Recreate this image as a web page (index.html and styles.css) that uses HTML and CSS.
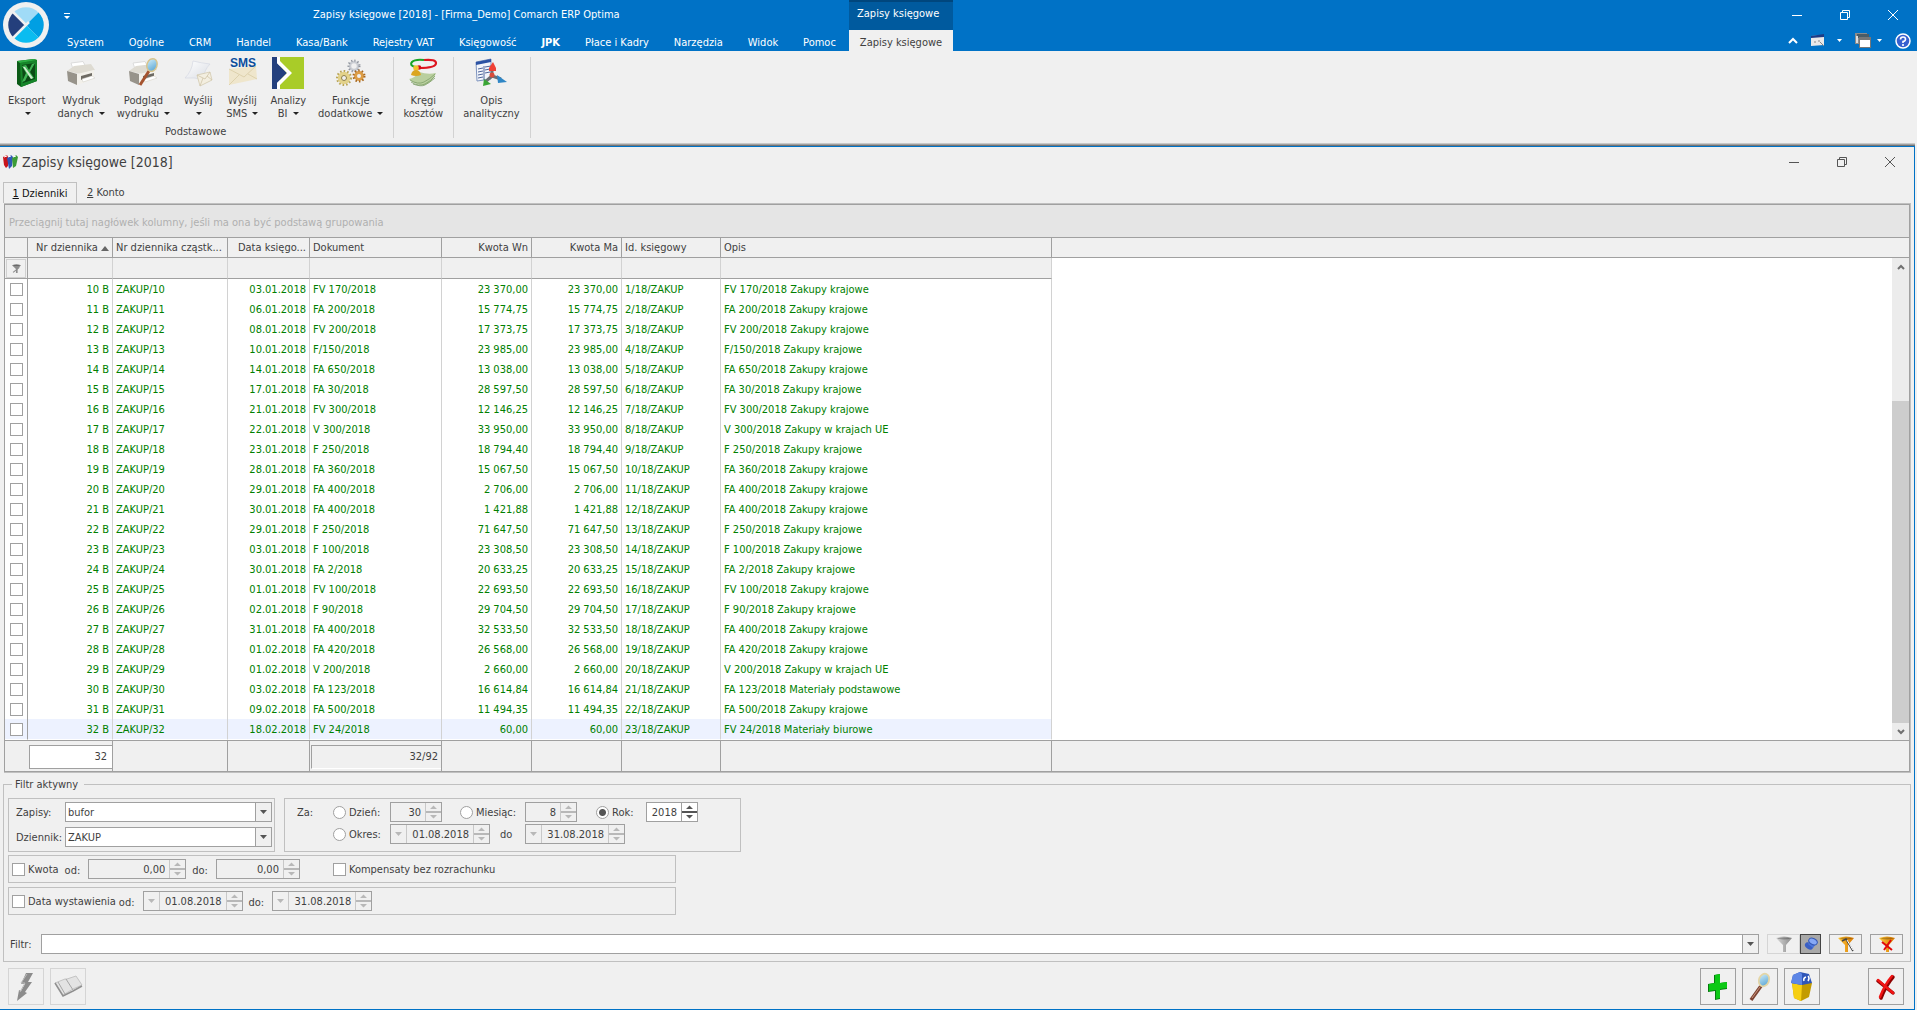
FILE: index.html
```html
<!DOCTYPE html>
<html lang="pl">
<head>
  <meta charset="UTF-8">
  <meta name="viewport" content="width=device-width, initial-scale=1.0">
  <title>Zapisy księgowe [2018] - [Firma_Demo] Comarch ERP Optima</title>
  <link rel="stylesheet" href="styles.css">
</head>
<body>
  <!-- icons used more than once -->
  <svg class="defs" width="0" height="0">
    <defs>
      <linearGradient id="gPaper" x1="0" y1="0" x2="1" y2="1"><stop offset="0" stop-color="#fff"/><stop offset="1" stop-color="#d9dce3"/></linearGradient>
      <linearGradient id="gGold" x1="0" y1="0" x2="1" y2="0"><stop offset="0" stop-color="#ffc93a"/><stop offset="1" stop-color="#d97800"/></linearGradient>
      <linearGradient id="gGray" x1="0" y1="0" x2="1" y2="0"><stop offset="0" stop-color="#d8d8d8"/><stop offset="1" stop-color="#8a8a8a"/></linearGradient>
      <linearGradient id="gLens" x1="0" y1="0" x2="1" y2="1"><stop offset="0" stop-color="#d5f0fb"/><stop offset="1" stop-color="#4f9fd0"/></linearGradient>
    </defs>
    <symbol id="min" viewBox="0 0 10 10"><path d="M0 5.500h10" stroke="currentColor" fill="none"/></symbol>
    <symbol id="restore" viewBox="0 0 10 10"><path d="M.5 2.500h7v7h-7zM2.500 2.500v-2h7v7h-2" stroke="currentColor" fill="none"/></symbol>
    <symbol id="close" viewBox="0 0 10 10"><path d="M0 0l10 10M10 0L0 10" stroke="currentColor" fill="none"/></symbol>
    <symbol id="spin" viewBox="0 0 15 18"><path d="M0 9h15" stroke="currentColor" stroke-width="2"/><path d="M4 6h7L7.500 2.500zM4 12h7l-3.500 3.500z" fill="currentColor"/></symbol>
    <symbol id="down" viewBox="0 0 7 4"><path d="M0 0h7L3.500 4z" fill="currentColor"/></symbol>
    <symbol id="funnel" viewBox="0 0 16 16"><path d="M0 2q8-3 16 0l-6 7v7H7V9z"/><path d="M1 2.500q7-2 14 0-7 2-14 0z" fill="#000" opacity=".25"/></symbol>
    <symbol id="printer" viewBox="0 0 32 32">
      <path d="M6 6l12-1.500 3 5.500-13 2z" fill="#fff" stroke="#dcdcdc"/>
      <path d="M2 14l7-5 17-2 4 6-15 4z" fill="#dedbd2"/>
      <path d="M2 14l10 3v11l-9-4z" fill="#97938a"/>
      <path d="M12 17l17-4v9l-17 6z" fill="#f2f0ea"/>
      <path d="M16 19l11-3v3l-11 4z" fill="#6d6a63"/>
      <path d="M17 22l10-3 3 2-12 4z" fill="#fff" stroke="#cfccc4" stroke-width=".5"/>
    </symbol>
    <symbol id="lens" viewBox="0 0 32 32">
      <path d="M17 15L7 29" stroke="#7d4433" stroke-width="3.500"/><path d="M16 16L8 27" stroke="#c9957f" stroke-width="1"/>
      <ellipse cx="20" cy="9" rx="5" ry="6.500" transform="rotate(22 20 9)" fill="url(#gLens)" stroke="#e4d6a6" stroke-width="1.800"/>
    </symbol>
  </svg>

  <header class="app-header">
    <button class="logo" aria-label="Menu aplikacji">
      <svg viewBox="0 0 46 46" width="46" height="46">
        <circle cx="23" cy="23" r="23" fill="#f0f0f0"/>
        <path d="M10.500 10.500a17.500 17.500 0 0 1 25 0L23 23z" fill="#a0dbf7"/>
        <path d="M35.500 10.500a17.500 17.500 0 0 1 0 25L23 23z" fill="#009fe3"/>
        <path d="M35.500 35.500a17.500 17.500 0 0 1-25 0L23 23z" fill="#0bbcf0"/>
        <path d="M10.500 10.500a17.500 17.500 0 0 0 0 25L23 23z" fill="#243f7c"/>
        <path d="M9.500 9.500L23 23 9.500 36.500M23 23l3-3" fill="none" stroke="#f0f0f0" stroke-width="2.500"/>
      </svg>
    </button>
    <div class="header-main">
      <div class="title-row">
        <button class="quick" aria-label="Szybki dostęp"><svg width="6" height="6" viewBox="0 0 6 6"><path d="M0 0h6v1H0zM0 3h6L3 6z" fill="#fff"/></svg></button>
        <span class="app-title">Zapisy księgowe [2018] - [Firma_Demo] Comarch ERP Optima</span>
        <span class="context-title">Zapisy księgowe</span>
        <div class="win-buttons">
          <button aria-label="Minimalizuj"><svg width="10" height="10"><use href="#min"/></svg></button>
          <button aria-label="Przywróć"><svg width="10" height="10"><use href="#restore"/></svg></button>
          <button aria-label="Zamknij"><svg width="10" height="10"><use href="#close"/></svg></button>
        </div>
      </div>
      <div class="menu-row">
        <nav class="menu">
          <a href="#">System</a><a href="#">Ogólne</a><a href="#">CRM</a><a href="#">Handel</a><a href="#">Kasa/Bank</a><a href="#">Rejestry VAT</a><a href="#">Księgowość</a><a href="#" class="bold">JPK</a><a href="#">Płace i Kadry</a><a href="#">Narzędzia</a><a href="#">Widok</a><a href="#">Pomoc</a>
        </nav>
        <a href="#" class="context-tab">Zapisy księgowe</a>
        <div class="menu-tools">
          <button aria-label="Zwiń wstążkę"><svg width="10" height="8" viewBox="0 0 10 8"><path d="M1 6l4-4 4 4" fill="none" stroke="#fff" stroke-width="2"/></svg></button>
          <button class="tool-card" aria-label="Wygląd"><svg width="14" height="13" viewBox="0 0 14 13"><path d="M0 2l13-1v10L0 12z" fill="#e9e9e9"/><path d="M0 2l13-2v3L0 4z" fill="#1d3c86"/><path d="M3 8h2M7 7h2M9 8l4 4" stroke="#888" fill="none"/></svg>
            <svg class="tiny" width="5" height="3"><use href="#down"/></svg></button>
          <button class="tool-windows" aria-label="Okna"><svg width="16" height="15" viewBox="0 0 16 15"><path d="M0 0h12v11H0z" fill="#8b8b8b"/><path d="M2 1h12v4H2z" fill="#4b5c66"/><path d="M1 3h2v7H1z" fill="#ddd"/><path d="M4 4h12v11H4z" fill="#777"/><path d="M5 7h10v7H5z" fill="#fff"/></svg>
            <svg class="tiny" width="5" height="3"><use href="#down"/></svg></button>
          <button aria-label="Pomoc"><svg width="16" height="16" viewBox="0 0 16 16"><circle cx="8" cy="8" r="7" fill="#3760cf" stroke="#fff" stroke-width="1.500"/><path d="M5.500 6.500q0-2.500 2.500-2.500t2.500 2.200Q10.500 8 8 8.500V10M8 11v2" fill="none" stroke="#fff" stroke-width="1.600"/></svg></button>
        </div>
      </div>
    </div>
  </header>

  <div class="ribbon">
    <div class="ribbon-group">
      <div class="ribbon-items">
        <button class="ribbon-btn">
          <svg width="32" height="32" viewBox="0 0 32 32"><path d="M6 4l17-2 3 1v21L10 30l-4-3z" fill="#0b5a16"/><path d="M9 6l17-3v21L10 30z" fill="#16852a"/><path d="M11 8l13-2v16l-12 4z" fill="#0a4a15"/><path d="M6 4l17-2 3 1L9 6z" fill="#2cae43"/><path d="M11 9l4-1 3 5 3-6 3-1-5 9 4 6-3 1-3-4-3 6-3 1 4-9z" fill="#3fb455"/><path d="M12 10l2 0 8 11-2 1z" fill="#cfeccf"/></svg>
          Eksport<br><i class="arrow"></i></button>
        <button class="ribbon-btn">
          <svg width="32" height="32"><use href="#printer"/></svg>
          Wydruk<br>danych <i class="arrow"></i></button>
        <button class="ribbon-btn">
          <svg width="32" height="32" viewBox="0 0 32 32"><use href="#printer"/><path d="M22 14L13 28" stroke="#a5532f" stroke-width="3"/><ellipse cx="25" cy="8" rx="5" ry="6.500" transform="rotate(20 25 8)" fill="url(#gLens)" stroke="#d8c48c" stroke-width="1.500"/></svg>
          Podgląd<br>wydruku <i class="arrow"></i></button>
        <button class="ribbon-btn">
          <svg width="32" height="32" viewBox="0 0 32 32"><path d="M11 4q8 2 17 3-6 6-7 16-8-3-18-2 7-7 8-17z" fill="url(#gPaper)" stroke="#d5d9e2" stroke-width=".7"/><path d="M15 18l13-3 2 8-12 6z" fill="#f3eee0" stroke="#cfc4a8" stroke-width=".7"/><path d="M15 18l8 4 5-7M18 29l3-8M30 23l-5-4" fill="none" stroke="#cfc4a8" stroke-width=".8"/></svg>
          Wyślij<br><i class="arrow"></i></button>
        <button class="ribbon-btn">
          <svg width="32" height="32" viewBox="0 0 32 32"><path d="M3 12l27-3 1 13L3 28z" fill="#efe6cc"/><path d="M3 12l15 8 12-11M3 28l10-10M31 22l-9-5" fill="none" stroke="#d8cba4" stroke-width=".8"/><text x="17" y="10" class="sms">SMS</text></svg>
          Wyślij<br>SMS <i class="arrow"></i></button>
        <button class="ribbon-btn">
          <svg width="32" height="32" viewBox="0 0 32 32"><path d="M8 0h24v32H8z" fill="#a9cc28"/><path d="M0 0h5v6l10 10L5 26v6H0z" fill="#24407e"/><path d="M5 0h3v4l12 12L8 28v4H5v-6l10-10L5 6z" fill="#fff"/></svg>
          Analizy<br>BI <i class="arrow"></i></button>
        <button class="ribbon-btn">
          <svg width="32" height="32" viewBox="0 0 32 32" fill="none"><circle cx="19" cy="9" r="4" stroke="#c9ccd2" stroke-width="2.500"/><circle cx="19" cy="9" r="5.500" stroke="#8e939c" stroke-width="2" stroke-dasharray="1.200 2"/><circle cx="9" cy="21" r="4.500" stroke="#e3d28a" stroke-width="3.500"/><circle cx="9" cy="21" r="7" stroke="#b9a455" stroke-width="2" stroke-dasharray="1.600 2"/><circle cx="9" cy="21" r="2.500" stroke="#8f7f40"/><circle cx="24" cy="19" r="3.500" stroke="#dd9d45" stroke-width="3"/><circle cx="24" cy="19" r="5.500" stroke="#a8661c" stroke-width="2" stroke-dasharray="1.500 2"/></svg>
          Funkcje<br>dodatkowe <i class="arrow"></i></button>
      </div>
      <div class="group-name">Podstawowe</div>
    </div>
    <div class="ribbon-group">
      <div class="ribbon-items">
        <button class="ribbon-btn">
          <svg width="32" height="32" viewBox="0 0 32 32"><path d="M2 22q6-1 10-7 9 3 17 1-3 9-11 12-9 1-16-6z" fill="#b9cf9e"/><path d="M3 23q8 5 14 2t11-8M4 25q8 5 14 2t10-8M6 27q8 3 12 1t10-7" fill="none" stroke="#7fa069" stroke-width=".8"/><path d="M8 10Q2 8 5 5t12-2" fill="none" stroke="#17a524" stroke-width="2.200"/><path d="M17 3q12-1 12 3 0 5-17 5" fill="none" stroke="#dd1620" stroke-width="2.200"/><circle cx="12" cy="10.500" r="2.300" fill="#d40d18"/><circle cx="9" cy="11" r="2.800" fill="#f2c230"/><path d="M4 18q1-5 5-5t5 5q-5 2-10 0z" fill="#dba520"/></svg>
          Kręgi<br>kosztów</button>
      </div>
    </div>
    <div class="ribbon-group">
      <div class="ribbon-items">
        <button class="ribbon-btn">
          <svg width="32" height="32" viewBox="0 0 32 32"><path d="M1 5l15-3v20L2 24z" fill="#f2f5fb" stroke="#7e94bf"/><path d="M1 5l15-3v3L1 8z" fill="#2b52a4"/><path d="M3 12l5-1M3 15l5-1M3 18l5-1M3 21l5-1M10 10l6-1M10 13l5-1M10 16l5-1M9 9v14" stroke="#4f659b" fill="none"/><path d="M17 19V9M17 19l9 3M17 19l-7 6" stroke-width="3" stroke="#6b6f75"/><path d="M14 11l4-6 3 6v3h-7z" fill="#ef4136"/><path d="M22 18l10 7-9 1z" fill="#2f86c5"/><path d="M8 29l1-7 7 5z" fill="#3aa535"/><circle cx="17" cy="18" r="2.500" fill="#d94b3a"/></svg>
          Opis<br>analityczny</button>
      </div>
    </div>
  </div>

  <main class="window">
    <div class="window-title">
      <svg width="15" height="14" viewBox="0 0 15 14"><path d="M0 2l4-2 1 2v9l-2 2-2-3z" fill="#c8141b"/><path d="M4 3l4-3 2 2-1 9-3 3z" fill="#2f58b5"/><path d="M9 3l4-3 2 2-2 9-3 2z" fill="#3c9c37"/><path d="M1 2l3-1M5 2l3-1M10 2l3-1" stroke="#fff"/></svg>
      <h1>Zapisy księgowe [2018]</h1>
      <div class="win-buttons dark">
        <button aria-label="Minimalizuj okno"><svg width="10" height="10"><use href="#min"/></svg></button>
        <button aria-label="Przywróć okno"><svg width="10" height="10"><use href="#restore"/></svg></button>
        <button aria-label="Zamknij okno"><svg width="10" height="10"><use href="#close"/></svg></button>
      </div>
    </div>

    <div class="tabs">
      <button class="tab active"><u>1</u> Dzienniki</button>
      <button class="tab"><u>2</u> Konto</button>
    </div>

    <div class="grid-panel">
      <div class="group-hint">Przeciągnij tutaj nagłówek kolumny, jeśli ma ona być podstawą grupowania</div>
      <table class="grid">
        <colgroup><col class="c-check"><col class="c-nr"><col class="c-part"><col class="c-date"><col class="c-doc"><col class="c-amount"><col class="c-amount"><col class="c-id"><col class="c-desc"><col></colgroup>
        <thead>
          <tr>
            <th></th><th class="num">Nr dziennika <i class="sort"></i></th><th>Nr dziennika cząstk...</th><th class="num">Data księgo...</th><th>Dokument</th><th class="num">Kwota Wn</th><th class="num">Kwota Ma</th><th>Id. księgowy</th><th>Opis</th><th class="rest"></th>
          </tr>
        </thead>
        <tbody id="rows">
          <tr class="filter-row">
            <td class="check"><button aria-label="Filtr kolumn"><svg width="9" height="9" viewBox="0 0 16 16" fill="#8c8c8c"><use href="#funnel"/><path d="M2 15L13 6" stroke="#8c8c8c" stroke-width="2"/></svg></button></td><td></td><td></td><td></td><td></td><td></td><td></td><td></td><td></td>
            <td class="rest" rowspan="24">
              <div class="scrollbar">
                <button aria-label="W górę"><svg width="8" height="6" viewBox="0 0 8 6"><path d="M1 5l3-3 3 3" fill="none" stroke="#707070" stroke-width="2"/></svg></button>
                <div class="track"></div>
                <div class="thumb"></div>
                <button aria-label="W dół"><svg width="8" height="6" viewBox="0 0 8 6"><path d="M1 1l3 3 3-3" fill="none" stroke="#707070" stroke-width="2"/></svg></button>
              </div>
            </td>
          </tr>
        </tbody>
        <tfoot>
          <tr>
            <td></td><td><div class="sum white">32</div></td><td></td><td></td><td><div class="sum">32/92</div></td><td></td><td></td><td></td><td></td><td class="rest"></td>
          </tr>
        </tfoot>
      </table>
    </div>

    <fieldset class="filters">
      <legend>Filtr aktywny</legend>
      <div class="filter-top">
        <div class="box kind">
          <label for="zapisy">Zapisy:</label>
          <div class="combo"><select id="zapisy"><option>bufor</option></select><span><svg width="7" height="4"><use href="#down"/></svg></span></div>
          <label for="dziennik">Dziennik:</label>
          <div class="combo"><select id="dziennik"><option>ZAKUP</option></select><span><svg width="7" height="4"><use href="#down"/></svg></span></div>
        </div>
        <div class="box period">
          <span>Za:</span>
          <label><input type="radio" name="za">Dzień:</label>
          <div class="field off short"><input type="text" value="30" aria-label="Dzień" disabled><svg width="15" height="18"><use href="#spin"/></svg></div>
          <label><input type="radio" name="za">Miesiąc:</label>
          <div class="field off short"><input type="text" value="8" aria-label="Miesiąc" disabled><svg width="15" height="18"><use href="#spin"/></svg></div>
          <label><input type="radio" name="za" checked>Rok:</label>
          <div class="field short"><input type="text" value="2018" aria-label="Rok"><svg width="15" height="18"><use href="#spin"/></svg></div>
          <label class="range-label"><input type="radio" name="za">Okres:</label>
          <div class="range">
            <div class="field off date"><span><svg width="7" height="4"><use href="#down"/></svg></span><input type="text" value="01.08.2018" aria-label="Okres od" disabled><svg width="15" height="18"><use href="#spin"/></svg></div>
            do
          </div>
          <div class="range">
            <div class="field off date"><span><svg width="7" height="4"><use href="#down"/></svg></span><input type="text" value="31.08.2018" aria-label="Okres do" disabled><svg width="15" height="18"><use href="#spin"/></svg></div>
          </div>
        </div>
      </div>
      <div class="box line amounts">
        <label class="first"><input type="checkbox">Kwota</label>
        <label for="kwota-od">od:</label>
        <div class="field off amount-from"><input type="text" id="kwota-od" value="0,00" disabled><svg width="15" height="18"><use href="#spin"/></svg></div>
        <label for="kwota-do">do:</label>
        <div class="field off amount-to"><input type="text" id="kwota-do" value="0,00" disabled><svg width="15" height="18"><use href="#spin"/></svg></div>
        <label class="comp"><input type="checkbox">Kompensaty bez rozrachunku</label>
      </div>
      <div class="box line dates">
        <label class="first"><input type="checkbox">Data wystawienia</label>
        <label for="data-od">od:</label>
        <div class="field off date"><span><svg width="7" height="4"><use href="#down"/></svg></span><input type="text" id="data-od" value="01.08.2018" disabled><svg width="15" height="18"><use href="#spin"/></svg></div>
        <label for="data-do">do:</label>
        <div class="field off date"><span><svg width="7" height="4"><use href="#down"/></svg></span><input type="text" id="data-do" value="31.08.2018" disabled><svg width="15" height="18"><use href="#spin"/></svg></div>
      </div>
      <div class="filter-line">
        <label for="filtr">Filtr:</label>
        <div class="combo wide"><select id="filtr"><option></option></select><span><svg width="7" height="4"><use href="#down"/></svg></span></div>
        <div class="pair">
          <button class="flat" aria-label="Zastosuj filtr" disabled><svg width="16" height="16" fill="url(#gGray)"><use href="#funnel"/></svg></button>
          <button class="pressed" aria-label="Przypnij"><svg width="16" height="16" viewBox="0 0 16 16"><ellipse cx="6" cy="10" rx="4.500" ry="3" transform="rotate(35 6 10)" fill="#3a5fc4"/><path d="M5 8l3-4 5 4-3 4z" fill="#4b76dc"/><ellipse cx="10" cy="5.500" rx="4.500" ry="3" transform="rotate(25 10 5.500)" fill="#86a8f6" stroke="#3558b4"/></svg></button>
        </div>
        <button aria-label="Konstruktor filtra"><svg width="16" height="16" viewBox="0 0 16 16" fill="url(#gGold)"><use href="#funnel"/><path d="M4 5l4-2 7 12" fill="none" stroke="#444" stroke-width="1.500"/><path d="M9 4l6 10" stroke="#fff"/></svg></button>
        <button aria-label="Wyczyść filtr"><svg width="16" height="16" viewBox="0 0 16 16" fill="url(#gGold)"><use href="#funnel"/><path d="M3 6l10 8M12 4L5 14" stroke="#e00909" stroke-width="2"/></svg></button>
      </div>
    </fieldset>

    <div class="actions">
      <button class="flat" aria-label="Księguj" disabled><svg width="32" height="32" viewBox="0 0 32 32"><path d="M16 2h7l-5 9h4l-7 10 2 1-10 8 2-11 2 1 4-7h-4z" fill="#8c8c8c"/><path d="M17 3l-6 9h4l-5 9" fill="none" stroke="#bdbdbd"/></svg></button>
      <button class="flat" aria-label="Dziennik" disabled><svg width="32" height="32" viewBox="0 0 32 32"><path d="M3 12l10-4 2 0 9-3 6 9-9 4-10 6z" fill="#e3e3e3" stroke="#c4c4c4"/><path d="M3 12l8 13 10-5 9-5" fill="none" stroke="#909090" stroke-width="1.500"/><path d="M14 8l7 11M6 11l7 12" fill="none" stroke="#a5a5a5"/></svg></button>
      <span class="spacer"></span>
      <button aria-label="Dodaj"><svg width="32" height="32" viewBox="0 0 32 32"><path d="M12 4l6-1v9l7-1v7l-7 1v9l-5 1v-9l-7 1v-8l6-1z" fill="#067a10"/><path d="M13 4l5-1v9l7-1v6l-7 1v9l-4 1v-9l-7 1v-7l6-1z" fill="#0cc915"/></svg></button>
      <button aria-label="Podgląd"><svg width="32" height="32"><use href="#lens"/></svg></button>
      <button aria-label="Usuń"><svg width="32" height="32" viewBox="0 0 32 32"><path d="M6 12h20l-3 14-8 4-7-3z" fill="#c39b00"/><path d="M6 12l10 2-1 16-7-3z" fill="#f6cf12"/><path d="M5 12l2-8 7-3 9 2 3 9-10 2z" fill="#2f56b8"/><path d="M5 12l2-8 7-3 2 2v11z" fill="#5d86e6"/><path d="M20 6q-3 1-2 4M22 5q2 2 0 5" fill="none" stroke="#fff" stroke-width="1.500"/></svg></button>
      <button class="exit" aria-label="Zamknij"><svg width="32" height="32" viewBox="0 0 32 32"><path d="M8 10l15 12M23 6q-7 8-12 21" fill="none" stroke="#8d0000" stroke-width="3.500" stroke-linecap="round"/><path d="M8 9l15 13M22 5q-7 8-12 21" fill="none" stroke="#f11313" stroke-width="2.500" stroke-linecap="round"/></svg></button>
    </div>
  </main>

  <script>
    // data, dokument, kwota, opis
    const wpisy = [
      ["03.01.2018", "FV 170/2018", "23 370,00", "Zakupy krajowe"],
      ["06.01.2018", "FA 200/2018", "15 774,75", "Zakupy krajowe"],
      ["08.01.2018", "FV 200/2018", "17 373,75", "Zakupy krajowe"],
      ["10.01.2018", "F/150/2018", "23 985,00", "Zakupy krajowe"],
      ["14.01.2018", "FA 650/2018", "13 038,00", "Zakupy krajowe"],
      ["17.01.2018", "FA 30/2018", "28 597,50", "Zakupy krajowe"],
      ["21.01.2018", "FV 300/2018", "12 146,25", "Zakupy krajowe"],
      ["22.01.2018", "V 300/2018", "33 950,00", "Zakupy w krajach UE"],
      ["23.01.2018", "F 250/2018", "18 794,40", "Zakupy krajowe"],
      ["28.01.2018", "FA 360/2018", "15 067,50", "Zakupy krajowe"],
      ["29.01.2018", "FA 400/2018", "2 706,00", "Zakupy krajowe"],
      ["30.01.2018", "FA 400/2018", "1 421,88", "Zakupy krajowe"],
      ["29.01.2018", "F 250/2018", "71 647,50", "Zakupy krajowe"],
      ["03.01.2018", "F 100/2018", "23 308,50", "Zakupy krajowe"],
      ["30.01.2018", "FA 2/2018", "20 633,25", "Zakupy krajowe"],
      ["01.01.2018", "FV 100/2018", "22 693,50", "Zakupy krajowe"],
      ["02.01.2018", "F 90/2018", "29 704,50", "Zakupy krajowe"],
      ["31.01.2018", "FA 400/2018", "32 533,50", "Zakupy krajowe"],
      ["01.02.2018", "FA 420/2018", "26 568,00", "Zakupy krajowe"],
      ["01.02.2018", "V 200/2018", "2 660,00", "Zakupy w krajach UE"],
      ["03.02.2018", "FA 123/2018", "16 614,84", "Materiały podstawowe"],
      ["09.02.2018", "FA 500/2018", "11 494,35", "Zakupy krajowe"],
      ["18.02.2018", "FV 24/2018", "60,00", "Materiały biurowe"]
    ];

    const tbody = document.getElementById('rows');
    wpisy.forEach(([data, dok, kwota, opis], i) => {
      const nr = i + 10;
      const tr = document.createElement('tr');
      tr.innerHTML = `<td class="check"><input type="checkbox" aria-label="Zaznacz ${nr}"></td>
        <td class="num">${nr} B</td><td>ZAKUP/${nr}</td><td class="num">${data}</td><td>${dok}</td>
        <td class="num">${kwota}</td><td class="num">${kwota}</td><td>${i + 1}/18/ZAKUP</td><td>${dok} ${opis}</td>`;
      if (i === wpisy.length - 1) tr.className = 'selected';
      tbody.appendChild(tr);
    });
  </script>
</body>
</html>
```
FILE: styles.css
```css
* {
  box-sizing: border-box;
}
body {
  margin: 0;
  min-height: 100vh;
  display: flex;
  flex-direction: column;
  background: #f0f0f0;
  color: #3f3f3f;
  font-family: "DejaVu Sans Condensed", "Noto Sans", sans-serif;
  font-size: 11px;
  line-height: 13px;
}
button, input, select {
  font: inherit;
  color: inherit;
  margin: 0;
}
button {
  padding: 0;
  border: none;
  background: none;
}
a {
  color: inherit;
  text-decoration: none;
}
.defs {
  position: absolute;
}

/* header */
.app-header {
  display: flex;
  height: 51px;
  background: #0072c6;
  color: #fff;
}
.logo {
  width: 52px;
  padding: 2px 0 0 3px;
  text-align: left;
}
.header-main {
  flex: 1;
  display: flex;
  flex-direction: column;
}
.title-row {
  display: flex;
  height: 30px;
}
.quick {
  width: 30px;
}
.app-title {
  width: 767px;
  padding: 8px 0 0 231px;
  white-space: nowrap;
}
.context-title {
  width: 104px;
  padding: 5px 8px 0;
  border-top: 2px solid #00467d;
  background: #005a9e;
}
.win-buttons {
  display: flex;
  align-items: center;
  margin-left: auto;
}
.win-buttons button {
  width: 48px;
  height: 30px;
}
.win-buttons svg {
  display: block;
  margin: auto;
}
.win-buttons.dark {
  color: #555;
}
.menu-row {
  display: flex;
  height: 21px;
  line-height: 25px;
}
.menu {
  display: flex;
  justify-content: space-between;
  width: 797px;
  padding: 0 13px 0 15px;
}
.bold {
  font-weight: bold;
}
.context-tab {
  width: 104px;
  background: #f0f0f0;
  color: #3f3f3f;
  text-align: center;
}
.menu-tools {
  display: flex;
  align-items: center;
  gap: 13px;
  margin-left: auto;
  padding-right: 6px;
}
.menu-tools button {
  display: flex;
  align-items: center;
}
.tool-card {
  gap: 12px;
}
.tool-windows {
  gap: 6px;
}

/* ribbon */
.ribbon {
  display: flex;
  height: 95px;
  padding: 6px 0 8px 2px;
}
.ribbon-group {
  display: flex;
  flex-direction: column;
  padding: 0 4px 0 3px;
  border-right: 1px solid #d2d2d2;
}
.ribbon-group:first-child {
  padding-left: 0;
}
.ribbon-items {
  display: flex;
}
.ribbon-btn {
  display: block;
  padding: 0 6px;
  line-height: 13px;
  text-align: center;
  white-space: nowrap;
}
.ribbon-btn svg {
  display: block;
  margin: 0 auto 5px;
}
.sms {
  font: bold 12px "Liberation Sans", sans-serif;
  fill: #0a4d9b;
  text-anchor: middle;
}
.arrow {
  display: inline-block;
  margin-left: 2px;
  vertical-align: 2px;
  border: 3px solid transparent;
  border-top-color: #222;
  border-bottom: none;
}
.group-name {
  margin-top: auto;
  text-align: center;
}

/* document window */
.window {
  flex: 1;
  display: flex;
  flex-direction: column;
  margin-right: 2px;
  padding: 0 3px 3px;
  border: 1px solid #0072c6;
  border-left: none;
  box-shadow: 0 -1px #747474, 0 -2px #a0a0a0, 0 -3px #c8c8c8;
}
.window-title {
  display: flex;
  align-items: center;
  gap: 4px;
  height: 30px;
  margin-right: -3px;
}
.window-title h1 {
  margin: 0;
  font-size: 14px;
  font-weight: normal;
  line-height: 20px;
}
.tabs {
  display: flex;
  margin-top: 5px;
}
.tab {
  height: 21px;
  padding: 0 10px;
  white-space: nowrap;
}
.tab.active {
  width: 74px;
  padding: 0;
  border: 1px solid #c0c0c0;
  border-bottom: none;
  color: #111;
}
.grid-panel {
  margin-left: 1px;
  border: 1px solid #c0c0c0;
  border-left-width: 0;
  box-shadow: inset 1px 1px #a0a0a0, inset -1px -1px #a0a0a0;
  padding: 1px;
}
.group-hint {
  height: 33px;
  padding: 11px 4px 0;
  border-bottom: 1px solid #a0a0a0;
  background: #e5e5e5;
  color: #b0b0b0;
}
.grid {
  width: 100%;
  table-layout: fixed;
  border-spacing: 0;
  background: #fff;
}
.c-check { width: 23px; }
.c-nr { width: 85px; }
.c-part { width: 115px; }
.c-date { width: 82px; }
.c-doc { width: 132px; }
.c-amount { width: 90px; }
.c-id { width: 99px; }
.c-desc { width: 331px; }
.grid th, .grid td {
  padding: 0 3px;
  height: 20px;
  border-right: 1px solid #d2d2d2;
  overflow: hidden;
  text-align: left;
  text-overflow: ellipsis;
  white-space: nowrap;
}
.grid th {
  border-right-color: #a0a0a0;
  border-bottom: 1px solid #a0a0a0;
  background: #f0f0f0;
  font-weight: normal;
}
.grid td {
  color: #008000;
}
.grid .num {
  text-align: right;
}
.grid .rest {
  position: relative;
  border-right: none;
}
.sort {
  display: inline-block;
  border: 4px solid transparent;
  border-bottom: 5px solid #666;
  border-top: none;
}
.grid .check {
  padding: 0 4px;
  border-right-color: #a0a0a0;
  text-align: center;
  line-height: 0;
}
.filter-row td {
  height: 21px;
  border-bottom: 1px solid #a0a0a0;
  background: #f0f0f0;
}
.filter-row .check {
  padding: 0 1px;
}
.filter-row .check button {
  width: 20px;
  height: 19px;
  border: 1px solid #d0d0d0;
}
.filter-row .rest {
  border-bottom: none;
  background: #fff;
}
.selected td {
  height: 21px;
  border-bottom: 1px solid #fff;
  background: #edf2ff;
}
.grid tfoot td {
  height: 31px;
  padding: 3px 0 2px 1px;
  border-top: 1px solid #a0a0a0;
  border-right-color: #a0a0a0;
  background: #f0f0f0;
  color: #3f3f3f;
}
.grid tfoot td:first-child {
  border-right: none;
}
.sum {
  height: 24px;
  padding-right: 3px;
  border: 1px solid #a0a0a0;
  border-right: none;
  border-bottom-color: #fff;
  line-height: 22px;
  text-align: right;
}
.sum.white {
  padding-right: 5px;
  border-bottom-color: #a0a0a0;
  background: #fff;
}
.scrollbar {
  position: absolute;
  top: 0;
  right: 0;
  bottom: 0;
  width: 17px;
  display: flex;
  flex-direction: column;
  background: #ececec;
}
.scrollbar button {
  height: 17px;
}
.track {
  flex: 126;
}
.thumb {
  flex: 322;
  background: #cdcdcd;
}

/* filters */
.filters {
  min-width: 0;
  margin: 5px 0 0;
  padding: 7px 5px 7px 4px;
  border: 1px solid #c0c0c0;
}
.filters legend {
  margin-left: 4px;
  padding: 0 6px 0 3px;
}
.filter-top {
  display: flex;
  gap: 9px;
}
.box {
  border: 1px solid #c0c0c0;
}
.kind {
  display: grid;
  grid-template-columns: 49px 207px;
  grid-auto-rows: 20px;
  gap: 5px 0;
  align-items: center;
  width: 267px;
  height: 54px;
  padding: 3px 2px 3px 7px;
}
.combo {
  display: grid;
  height: 20px;
}
.combo select, .combo span {
  grid-area: 1 / 1;
}
.combo select {
  width: 100%;
  height: 20px;
  padding: 0 2px;
  border: 1px solid #a0a0a0;
  border-radius: 0;
  background: #fff;
  appearance: none;
}
.combo span {
  justify-self: end;
  display: flex;
  align-items: center;
  justify-content: center;
  width: 17px;
  border: 1px solid #a0a0a0;
  background: #f0f0f0;
  color: #555;
  pointer-events: none;
}
.period {
  display: grid;
  grid-template-columns: 36px 57px 70px 65px 71px 50px 52px;
  grid-auto-rows: 20px;
  gap: 2px 0;
  align-items: center;
  width: 457px;
  height: 54px;
  padding: 3px 0 3px 12px;
}
.period label, .line label {
  display: flex;
  align-items: center;
  white-space: nowrap;
}
.range-label {
  grid-column: 2;
}
.range {
  grid-column: span 2;
  display: flex;
  align-items: center;
  gap: 10px;
}
input[type="radio"], input[type="checkbox"] {
  appearance: none;
  width: 13px;
  height: 13px;
  margin: 0 3px 0 0;
  border: 1px solid #a0a0a0;
  background: #fff;
}
input[type="radio"] {
  border-radius: 50%;
}
input[type="radio"]:checked {
  background: radial-gradient(#555 3px, #fff 4px);
}
.grid input[type="checkbox"] {
  margin: 0;
}
.field {
  display: flex;
  height: 20px;
  border: 1px solid #a0a0a0;
  background: #fff;
}
.field input {
  flex: 1;
  min-width: 0;
  padding: 0 4px;
  border: none;
  border-right: 1px solid #a0a0a0;
  background: none;
  text-align: right;
}
.field svg {
  color: #555;
}
.field.off {
  background: #f0f0f0;
}
.field.off input {
  border-right-color: #c8c8c8;
}
.field.off svg {
  color: #b8b8b8;
}
.field span {
  display: flex;
  align-items: center;
  justify-content: center;
  width: 16px;
  border-right: 1px solid #c8c8c8;
}
.short {
  width: 52px;
}
.date {
  width: 100px;
}
.line {
  display: flex;
  align-items: center;
  width: 668px;
  height: 28px;
  margin-top: 3px;
  padding: 0 3px;
}
.line + .line {
  margin-top: 4px;
}
.line label[for] {
  padding: 2px 8px 0 6px;
}
.dates label[for="data-od"] {
  padding-left: 3px;
}
.amount-from {
  width: 98px;
}
.amount-to {
  width: 84px;
}
.comp {
  margin-left: 33px;
}
.filter-line {
  display: flex;
  align-items: center;
  gap: 8px;
  margin-top: 19px;
  padding: 0 2px;
}
.filter-line label {
  width: 23px;
}
.wide {
  flex: 1;
}
.pair {
  display: flex;
}
.filter-line button {
  display: flex;
  align-items: center;
  justify-content: center;
  width: 33px;
  height: 20px;
  border: 1px solid #a0a0a0;
}
.filter-line .flat {
  border-color: #d5d5d5;
}
.filter-line .pressed {
  width: 21px;
  border-color: #444;
  background: #a8a8a8;
}

/* bottom buttons */
.actions {
  display: flex;
  gap: 6px;
  margin-top: 6px;
  padding: 0 7px 0 5px;
}
.actions button {
  width: 36px;
  height: 37px;
  border: 1px solid #a0a0a0;
}
.actions svg {
  display: block;
  margin: auto;
}
.actions .flat {
  border-color: #d5d5d5;
}
.spacer {
  flex: 1;
}
.exit {
  margin-left: 42px;
}
```
